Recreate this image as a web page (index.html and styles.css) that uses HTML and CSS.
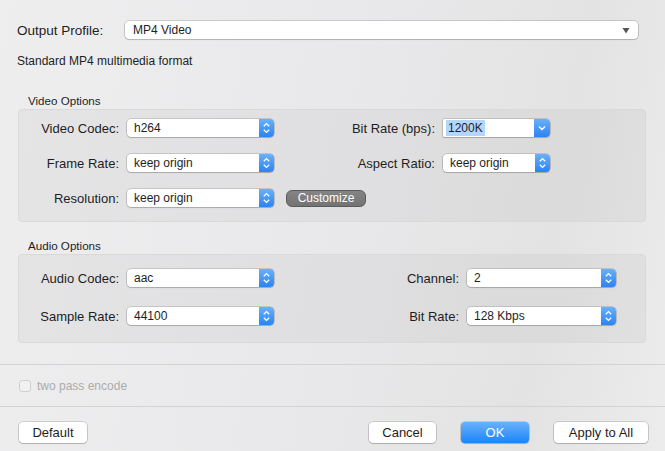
FILE: index.html
```html
<!DOCTYPE html>
<html lang="en">
  <head>
    <meta charset="utf-8" />
    <meta name="viewport" content="width=device-width, initial-scale=1" />
    <title>Output Settings</title>
    <link rel="stylesheet" href="styles.css">
</head>
<body>
    <div class="window">
        <!--profile picker at the top-->
        <div class="profile-row">
            <span class="profile-label">Output Profile:</span>
            <div class="dropdown">
                <span class="dropdown-text">MP4 Video</span>
                <svg class="dropdown-arrow" width="8" height="7" viewBox="0 0 8 7"><polygon points="0.5,1 7.5,1 4,6.5" fill="#555"/></svg>
            </div>
        </div>
        <div class="desc">Standard MP4 multimedia format</div>

        <!--video group-->
        <div class="group-title">Video Options</div>
        <div class="group video-grid">
            <span class="lbl">Video Codec:</span>
            <div class="popup"><span class="popup-text">h264</span><span class="stepper"><svg width="15" height="18" viewBox="0 0 15 18"><path d="M4.8 7.2 L7.5 4.6 L10.2 7.2 M4.8 10.8 L7.5 13.4 L10.2 10.8" fill="none" stroke="#fff" stroke-width="1.3"/></svg></span></div>
            <span class="lbl">Bit Rate (bps):</span>
            <div class="popup combo"><span class="popup-text"><span class="sel">1200K</span></span><span class="stepper"><svg width="16" height="18" viewBox="0 0 16 18"><path d="M5 7.6 L8 10.6 L11 7.6" fill="none" stroke="#fff" stroke-width="1.4"/></svg></span></div>

            <span class="lbl">Frame Rate:</span>
            <div class="popup"><span class="popup-text">keep origin</span><span class="stepper"><svg width="15" height="18" viewBox="0 0 15 18"><path d="M4.8 7.2 L7.5 4.6 L10.2 7.2 M4.8 10.8 L7.5 13.4 L10.2 10.8" fill="none" stroke="#fff" stroke-width="1.3"/></svg></span></div>
            <span class="lbl">Aspect Ratio:</span>
            <div class="popup"><span class="popup-text">keep origin</span><span class="stepper"><svg width="15" height="18" viewBox="0 0 15 18"><path d="M4.8 7.2 L7.5 4.6 L10.2 7.2 M4.8 10.8 L7.5 13.4 L10.2 10.8" fill="none" stroke="#fff" stroke-width="1.3"/></svg></span></div>

            <span class="lbl">Resolution:</span>
            <div class="popup"><span class="popup-text">keep origin</span><span class="stepper"><svg width="15" height="18" viewBox="0 0 15 18"><path d="M4.8 7.2 L7.5 4.6 L10.2 7.2 M4.8 10.8 L7.5 13.4 L10.2 10.8" fill="none" stroke="#fff" stroke-width="1.3"/></svg></span></div>
            <button class="customize">Customize</button>
        </div>

        <!--audio group-->
        <div class="group-title audio-title">Audio Options</div>
        <div class="group audio-grid">
            <span class="lbl">Audio Codec:</span>
            <div class="popup"><span class="popup-text">aac</span><span class="stepper"><svg width="15" height="18" viewBox="0 0 15 18"><path d="M4.8 7.2 L7.5 4.6 L10.2 7.2 M4.8 10.8 L7.5 13.4 L10.2 10.8" fill="none" stroke="#fff" stroke-width="1.3"/></svg></span></div>
            <span class="lbl">Channel:</span>
            <div class="popup"><span class="popup-text">2</span><span class="stepper"><svg width="15" height="18" viewBox="0 0 15 18"><path d="M4.8 7.2 L7.5 4.6 L10.2 7.2 M4.8 10.8 L7.5 13.4 L10.2 10.8" fill="none" stroke="#fff" stroke-width="1.3"/></svg></span></div>

            <span class="lbl">Sample Rate:</span>
            <div class="popup"><span class="popup-text">44100</span><span class="stepper"><svg width="15" height="18" viewBox="0 0 15 18"><path d="M4.8 7.2 L7.5 4.6 L10.2 7.2 M4.8 10.8 L7.5 13.4 L10.2 10.8" fill="none" stroke="#fff" stroke-width="1.3"/></svg></span></div>
            <span class="lbl">Bit Rate:</span>
            <div class="popup"><span class="popup-text">128 Kbps</span><span class="stepper"><svg width="15" height="18" viewBox="0 0 15 18"><path d="M4.8 7.2 L7.5 4.6 L10.2 7.2 M4.8 10.8 L7.5 13.4 L10.2 10.8" fill="none" stroke="#fff" stroke-width="1.3"/></svg></span></div>
        </div>
    </div>

    <!--disabled option between two separators-->
    <div class="pass-row">
        <span class="check"></span>
        <span class="pass-text">two pass encode</span>
    </div>

    <div class="buttons">
        <button class="btn btn-default">Default</button>
        <span class="spacer"></span>
        <button class="btn btn-cancel">Cancel</button>
        <button class="btn btn-ok">OK</button>
        <button class="btn btn-apply">Apply to All</button>
    </div>
</body>
</html>
```

FILE: styles.css
```css
body{
    margin:0;
    width:665px;
    height:451px;
    overflow:hidden;
    font-family:"Liberation Sans", Arial, sans-serif;
    color:#1e1e1e;
    background:linear-gradient(100deg, #eeeeef 0%, #e8e8ea 55%, #e3e3e3 80%, #ececec 100%);
}
.window{
    padding:21px 19px 0 17px;
    height:343px;
    border-bottom:1px solid #d3d3d3;
}
.profile-row{
    display:flex;
    align-items:center;
    height:18px;
}
.profile-label{
    width:108px;
    font-size:13.5px;
}
.dropdown{
    flex:1;
    margin-right:8px;
    height:18px;
    background:#fff;
    border-radius:4px;
    box-shadow:0 0 0 0.6px rgba(0,0,0,0.28), 0 1px 1px rgba(0,0,0,0.12);
    display:flex;
    align-items:center;
    padding:0 8px 0 8px;
}
.dropdown-text{
    flex:1;
    font-size:12px;
}
.desc{
    margin-top:15px;
    font-size:12px;
    line-height:14px;
}
.group-title{
    margin-top:26px;
    margin-left:11px;
    font-size:11.6px;
    line-height:14px;
}
.audio-title{
    margin-top:17px;
}
.group{
    margin-top:1px;
    margin-left:1px;
    border:1px solid #d9d9da;
    border-radius:4px;
    background:rgba(0,0,0,0.035);
    display:grid;
    align-items:center;
    column-gap:8px;
}
.video-grid{
    grid-template-columns:100px 147px 1fr 107px;
    row-gap:17px;
    padding:9px 95px 14px 0;
}
.audio-grid{
    grid-template-columns:100px 147px 1fr 149px;
    row-gap:20px;
    padding:14px 29px 17px 0;
}
.lbl{
    font-size:13px;
    text-align:right;
    white-space:nowrap;
}
.popup{
    height:18px;
    background:#fff;
    border-radius:4px;
    box-shadow:0 0 0 0.6px rgba(0,0,0,0.25), 0 1px 1px rgba(0,0,0,0.14);
    display:flex;
    align-items:center;
    overflow:hidden;
}
.popup-text{
    flex:1;
    font-size:12px;
    padding-left:7px;
    white-space:nowrap;
}
.stepper{
    display:flex;
    height:18px;
    background:linear-gradient(#68b1fa, #2b83f6);
}
.combo{
    border-radius:1px 4px 4px 1px;
}
.combo .popup-text{
    padding-left:3px;
}
.sel{
    background:#b3d6fd;
    padding:1px 2px;
}
.customize{
    justify-self:start;
    margin-left:4px;
    width:80px;
    height:17px;
    padding:0;
    border:1px solid #5a5a5a;
    border-radius:6px;
    background:linear-gradient(#858585, #737373);
    color:#fff;
    font-family:"Liberation Sans", Arial, sans-serif;
    font-size:12px;
    line-height:15px;
}
.pass-row{
    height:41px;
    padding-left:19px;
    display:flex;
    align-items:center;
    gap:6px;
    border-bottom:1px solid #d3d3d3;
}
.check{
    width:10px;
    height:10px;
    border:1px solid #cfcfcf;
    border-radius:3px;
    background:#f1f1f1;
}
.pass-text{
    font-size:12px;
    color:#ababab;
}
.buttons{
    display:flex;
    align-items:center;
    gap:25px;
    padding:15px 17px 0 19px;
}
.spacer{
    flex:1;
}
.btn{
    height:21px;
    padding:0;
    border:none;
    border-radius:4px;
    background:#fff;
    box-shadow:0 0 0 0.6px rgba(0,0,0,0.25), 0 1px 1px rgba(0,0,0,0.14);
    font-family:"Liberation Sans", Arial, sans-serif;
    font-size:13px;
    color:#1e1e1e;
}
.btn-default{
    width:68px;
}
.btn-cancel{
    width:67px;
}
.btn-ok{
    width:68px;
    color:#fff;
    background:linear-gradient(#6ab2fb, #1b84fa);
}
.btn-apply{
    width:94px;
}
```
